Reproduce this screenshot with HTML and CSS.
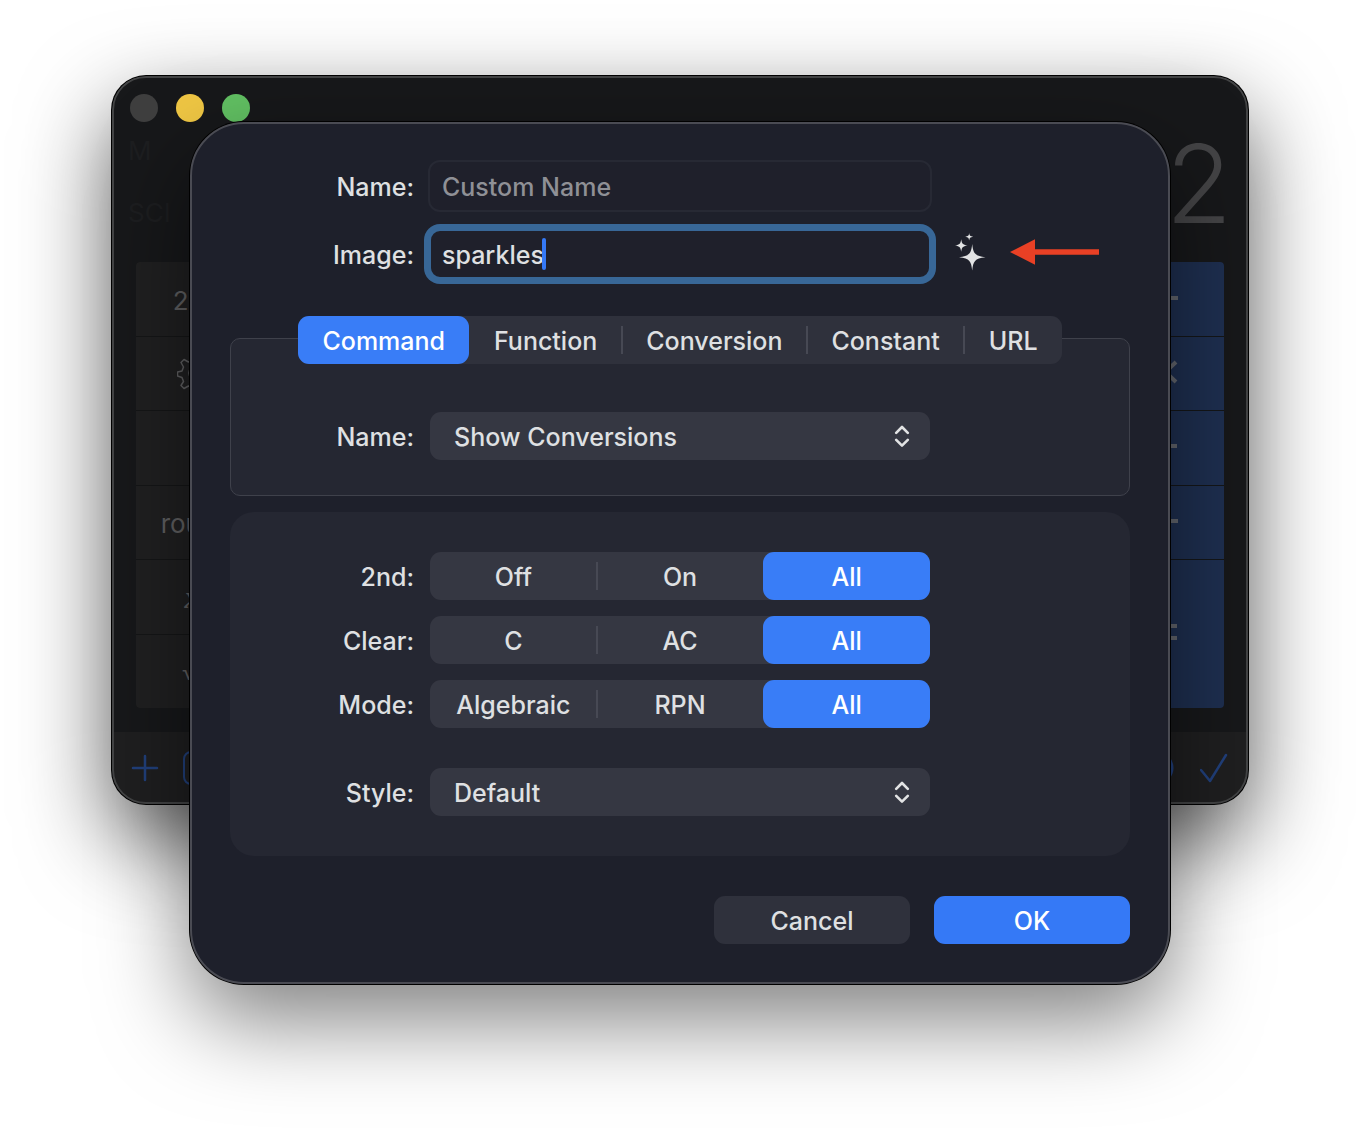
FILE: index.html
```html
<!DOCTYPE html>
<html lang="en">
<head>
<meta charset="utf-8">
<meta name="viewport" content="width=device-width, initial-scale=1">
<title>Calculator</title>
<link rel="stylesheet" href="styles.css">
</head>
<body>
<main class="stage">
  <section class="window" aria-label="Calculator">
    <header class="lights">
      <span class="light light-off"></span>
      <span class="light light-yellow"></span>
      <span class="light light-green"></span>
    </header>
    <div class="readout">
      <div class="status"><span>M</span><span>SCI</span></div>
      <output class="value">2</output>
    </div>
    <div class="keypad">
      <div class="keys keys-left">
        <button class="key key-text" type="button">2nd</button>
        <button class="key" type="button" aria-label="Settings">
          <svg width="38" height="38" viewBox="0 0 38 38" fill="none" stroke="currentColor" stroke-width="1.500" stroke-linejoin="round"><path d="M17 2h4l1.500 4.500 4 1.500 4.500-2.500 3 3-2.500 4.500 1.500 4 4 1v4l-4 1.500-1.500 4 2.500 4-3 3-4.500-2.500-4 2-1.500 4h-4l-1.500-4-4-2-4.500 2.500-3-3 2.500-4-1.500-4-4.500-1.500v-4l4.500-1 1.500-4-2.500-4.500 3-3 4.500 2.500 4-1.500z"/><circle cx="19" cy="19" r="7"/></svg>
        </button>
        <button class="key" type="button" aria-label="Blank"></button>
        <button class="key key-text" type="button">round</button>
        <button class="key key-math" type="button"><i>x</i><sup>2</sup></button>
        <button class="key key-root" type="button">√<i>x</i></button>
      </div>
      <div class="keys keys-right">
        <button class="key" type="button" aria-label="Divide"><svg width="32" height="32" viewBox="0 0 32 32" stroke="currentColor" stroke-width="4"><path d="M1 15h29M14 4h4M14 26h4"/></svg></button>
        <button class="key" type="button" aria-label="Multiply"><svg width="32" height="32" viewBox="0 0 32 32" stroke="currentColor" stroke-width="4"><path d="M7 5l21 20M28 5L7 25"/></svg></button>
        <button class="key" type="button" aria-label="Subtract"><svg width="32" height="32" viewBox="0 0 32 32" stroke="currentColor" stroke-width="4"><path d="M2 14h27"/></svg></button>
        <button class="key" type="button" aria-label="Add"><svg width="32" height="32" viewBox="0 0 32 32" stroke="currentColor" stroke-width="4"><path d="M1 15h29M16 1v28"/></svg></button>
        <button class="key key-tall" type="button" aria-label="Equals"><svg width="32" height="32" viewBox="0 0 32 32" stroke="currentColor" stroke-width="4"><path d="M2 8h27M2 20h27"/></svg></button>
      </div>
    </div>
    <footer class="toolbar">
      <div class="tools">
        <svg width="28" height="36" viewBox="0 0 28 36" fill="none" stroke="currentColor" stroke-width="2.500" stroke-linecap="round"><path d="M2 18h24M14 6v24"/></svg>
        <svg width="36" height="36" viewBox="0 0 36 36" fill="none" stroke="currentColor" stroke-width="2"><rect x="1" y="2" width="33" height="32" rx="7"/></svg>
      </div>
      <div class="tools">
        <svg width="36" height="36" viewBox="0 0 36 36" fill="none" stroke="currentColor" stroke-width="3"><circle cx="17" cy="18" r="15"/></svg>
        <svg width="28" height="36" viewBox="0 0 28 36" fill="none" stroke="currentColor" stroke-width="2.500" stroke-linecap="round" stroke-linejoin="round"><path d="M1 20l9 11L26 5"/></svg>
      </div>
    </footer>
  </section>

  <form class="dialog" role="dialog" aria-label="Edit button">
    <div class="rows">
      <div class="row">
        <label class="label" for="custom-name">Name:</label>
        <input class="field" id="custom-name" type="text" placeholder="Custom Name">
      </div>
      <div class="row">
        <label class="label" for="image">Image:</label>
        <div class="field-wrap">
          <input class="field field-active" id="image" type="text" value="sparkles" spellcheck="false">
          <span class="caret"></span>
        </div>
        <div class="hint">
          <svg width="32" height="38" viewBox="0 0 32 38" fill="#e2e3e4"><path d="M17.200 11C18.200 20 19.500 23 30.500 24.200C19.500 25.400 18.200 28.500 17.200 37.500C16.200 28.500 15 25.400 4 24.200C15 23 16.200 20 17.200 11z"/><path d="M6.200 6.200C6.900 10.600 7.600 11.700 12.500 12.500C7.600 13.300 6.900 14.400 6.200 18.800C5.500 14.400 4.900 13.300 0 12.500C4.900 11.700 5.500 10.600 6.200 6.200z"/><path d="M14.200 0C14.600 2.700 15.200 3.300 18.200 3.800C15.200 4.300 14.600 4.900 14.200 7.600C13.800 4.900 13.200 4.300 10.200 3.800C13.200 3.300 13.800 2.700 14.200 0z"/></svg>
          <svg width="90" height="26" viewBox="0 0 90 26" fill="#e94025"><path d="M0 13L25 .3v10h64v5.500H25v10z"/></svg>
        </div>
      </div>
    </div>

    <div class="segments tabs" role="radiogroup" aria-label="Type">
      <label class="segment"><input type="radio" name="type" checked><span>Command</span></label>
      <label class="segment"><input type="radio" name="type"><span>Function</span></label>
      <label class="segment"><input type="radio" name="type"><span>Conversion</span></label>
      <label class="segment"><input type="radio" name="type"><span>Constant</span></label>
      <label class="segment"><input type="radio" name="type"><span>URL</span></label>
    </div>
    <section class="box">
      <div class="row">
        <label class="label" for="command">Name:</label>
        <div class="popup">
          <select id="command"><option>Show Conversions</option></select>
          <svg width="16" height="22" viewBox="0 0 16 22" fill="none" stroke="#e2e3e4" stroke-width="2.600" stroke-linecap="round" stroke-linejoin="round"><path d="M2.200 7.800L8 2l5.800 5.800M2.200 14.800L8 20.600l5.800-5.800"/></svg>
        </div>
      </div>
    </section>

    <section class="panel">
      <div class="rows">
        <div class="row">
          <span class="label" id="second">2nd:</span>
          <div class="segments equal" role="radiogroup" aria-labelledby="second">
            <label class="segment"><input type="radio" name="second"><span>Off</span></label>
            <label class="segment"><input type="radio" name="second"><span>On</span></label>
            <label class="segment"><input type="radio" name="second" checked><span>All</span></label>
          </div>
        </div>
        <div class="row">
          <span class="label" id="clear">Clear:</span>
          <div class="segments equal" role="radiogroup" aria-labelledby="clear">
            <label class="segment"><input type="radio" name="clear"><span>C</span></label>
            <label class="segment"><input type="radio" name="clear"><span>AC</span></label>
            <label class="segment"><input type="radio" name="clear" checked><span>All</span></label>
          </div>
        </div>
        <div class="row">
          <span class="label" id="mode">Mode:</span>
          <div class="segments equal" role="radiogroup" aria-labelledby="mode">
            <label class="segment"><input type="radio" name="mode"><span>Algebraic</span></label>
            <label class="segment"><input type="radio" name="mode"><span>RPN</span></label>
            <label class="segment"><input type="radio" name="mode" checked><span>All</span></label>
          </div>
        </div>
      </div>
      <div class="row">
        <label class="label" for="style">Style:</label>
        <div class="popup">
          <select id="style"><option>Default</option></select>
          <svg width="16" height="22" viewBox="0 0 16 22" fill="none" stroke="#e2e3e4" stroke-width="2.600" stroke-linecap="round" stroke-linejoin="round"><path d="M2.200 7.800L8 2l5.800 5.800M2.200 14.800L8 20.600l5.800-5.800"/></svg>
        </div>
      </div>
    </section>

    <div class="actions">
      <button class="button" type="button">Cancel</button>
      <button class="button button-primary" type="button">OK</button>
    </div>
  </form>
</main>
</body>
</html>
```

FILE: styles.css
```css
* { box-sizing: border-box; }

body {
  margin: 0;
  background: #fff;
  color: #dfe0e2;
  font: 500 25px/32px Inter, "Liberation Sans", sans-serif;
}

button, input, select { font: inherit; color: inherit; }
svg { display: block; flex: none; }

/* The sheet shares one grid cell with the window it covers. */
.stage {
  display: grid;
  padding: 76px 112px 148px;
}
.window, .dialog { grid-area: 1 / 1; }

.window {
  align-self: start;
  overflow: hidden;
  border-radius: 34px;
  background: #17181a;
  box-shadow: 0 0 0 1px #000, 0 36px 90px rgba(0, 0, 0, .65);
  position: relative;
  font-weight: 400;
}
.window::after {
  content: "";
  position: absolute;
  inset: 0;
  border: 2px solid #434445;
  border-radius: inherit;
  pointer-events: none;
}

.lights { display: flex; gap: 18px; padding: 18px 18px 0; }
.light { width: 28px; height: 28px; border-radius: 50%; }
.light-off { background: #3f3f3f; }
.light-yellow { background: #f0c744; }
.light-green { background: #62c163; }

.readout {
  display: flex;
  justify-content: space-between;
  height: 140px;
  padding: 0 16px;
}
.status {
  display: flex;
  flex-direction: column;
  gap: 30px;
  padding-top: 13px;
  color: #1d1e20;
  font-size: 26px;
}
.value { font-size: 108px; line-height: 124px; font-weight: 300; color: #444446; }

.keypad {
  display: flex;
  justify-content: space-between;
  padding: 0 24px 24px;
}
.keys {
  display: grid;
  grid-template-rows: repeat(6, 1fr);
  gap: 1px;
  width: 11.111%;
  height: 446px;
  border-radius: 4px;
  overflow: hidden;
}
.keys-left { background: #151617; color: #606062; }
.keys-right { background: #141618; color: #64676e; }
.key {
  display: flex;
  align-items: center;
  justify-content: center;
  padding: 0;
  border: 0;
  background: #202021;
}
.keys-right .key { background: #1e2f50; }
.key-tall { grid-row: span 2; }
.key-text { padding-top: 4px; font-size: 26px; }
.key-math { font-family: "Liberation Serif", serif; font-size: 32px; font-weight: 700; }
.key-math sup { font-size: 16px; line-height: 16px; align-self: center; padding-bottom: 16px; }
.key-root { font-weight: 300; }

.toolbar {
  display: flex;
  justify-content: space-between;
  align-items: center;
  height: 72px;
  padding: 0 20px 0 19px;
  background: #1f1f20;
  color: #21407c;
}
.tools { display: flex; gap: 24px; }

.dialog {
  justify-self: center;
  width: 100%;
  max-width: 980px;
  margin-top: 46px;
  padding: 36px 38px 38px;
  border: 2px solid #4a4b53;
  border-radius: 54px;
  background: #1e202b;
  box-shadow: 0 0 0 1px #000, 0 36px 90px rgba(0, 0, 0, .5);
  position: relative;
}

.rows { display: flex; flex-direction: column; gap: 16px; }
.row {
  display: grid;
  grid-template-columns: 1fr 500px 1fr;
  align-items: center;
  column-gap: 16px;
}
.label { padding-top: 2px; text-align: right; }

.field-wrap { position: relative; margin: 0 -2px; }
.field {
  display: block;
  height: 52px;
  margin: 0 -2px;
  padding: 2px 12px 0;
  border: 2px solid #272934;
  border-radius: 12px;
  outline: 0;
  background: #1f202b;
}
.field::placeholder { color: #8f9096; opacity: 1; }
.field-wrap .field { width: 100%; margin: 0; }
.field-active {
  padding: 2px 11px 0;
  border: 3px solid #386797;
  box-shadow: 0 0 0 4px #386797;
}
.caret {
  position: absolute;
  top: 10px;
  left: 114px;
  width: 4px;
  height: 32px;
  border-radius: 2px;
  background: #3579f6;
}
.hint { display: flex; align-items: center; gap: 23px; padding: 0 0 4px 9px; }

.segments {
  display: flex;
  height: 48px;
  border-radius: 11px;
  background: #353742;
}
.segment {
  display: grid;
  place-items: center;
  position: relative;
  border-radius: 11px;
}
.segment > * { grid-area: 1 / 1; }
.segment input {
  appearance: none;
  width: 100%;
  height: 100%;
  margin: 0;
  border-radius: 11px;
}
.segment input:checked { background: #397df7; }
.segment span { position: relative; padding-top: 2px; }
.segment:has(:checked) { color: #fff; }
.segment::after {
  content: "";
  position: absolute;
  top: 10px;
  right: -1px;
  width: 2px;
  height: 28px;
  background: #474954;
}
.segment:last-child::after,
.segment:has(:checked)::after,
.segment:has(+ .segment :checked)::after { display: none; }
.equal .segment { flex: 1; }

.tabs {
  width: 764px;
  margin: 36px auto -26px;
  position: relative;
  background: #2f313c;
}
.tabs .segment { flex: 1 1 auto; }
.tabs .segment span { padding: 2px 20px 0; }

.box {
  padding: 73px 0 35px;
  border: 1px solid #3f414b;
  border-radius: 10px;
  background: #252732;
}

.panel {
  display: flex;
  flex-direction: column;
  gap: 40px;
  margin-top: 16px;
  padding: 40px 0;
  border-radius: 24px;
  background: #252732;
}

.popup { display: grid; align-items: center; }
.popup > * { grid-area: 1 / 1; }
.popup select {
  appearance: none;
  width: 100%;
  height: 48px;
  padding: 2px 48px 0 24px;
  border: 0;
  border-radius: 11px;
  background: #353742;
}
.popup svg { justify-self: end; margin-right: 20px; pointer-events: none; }

.actions {
  display: flex;
  justify-content: flex-end;
  gap: 24px;
  margin-top: 40px;
}
.button {
  width: 196px;
  height: 48px;
  padding: 2px 0 0;
  border: 0;
  border-radius: 11px;
  background: #2f313c;
}
.button-primary { background: #3579f6; color: #fff; }
```
